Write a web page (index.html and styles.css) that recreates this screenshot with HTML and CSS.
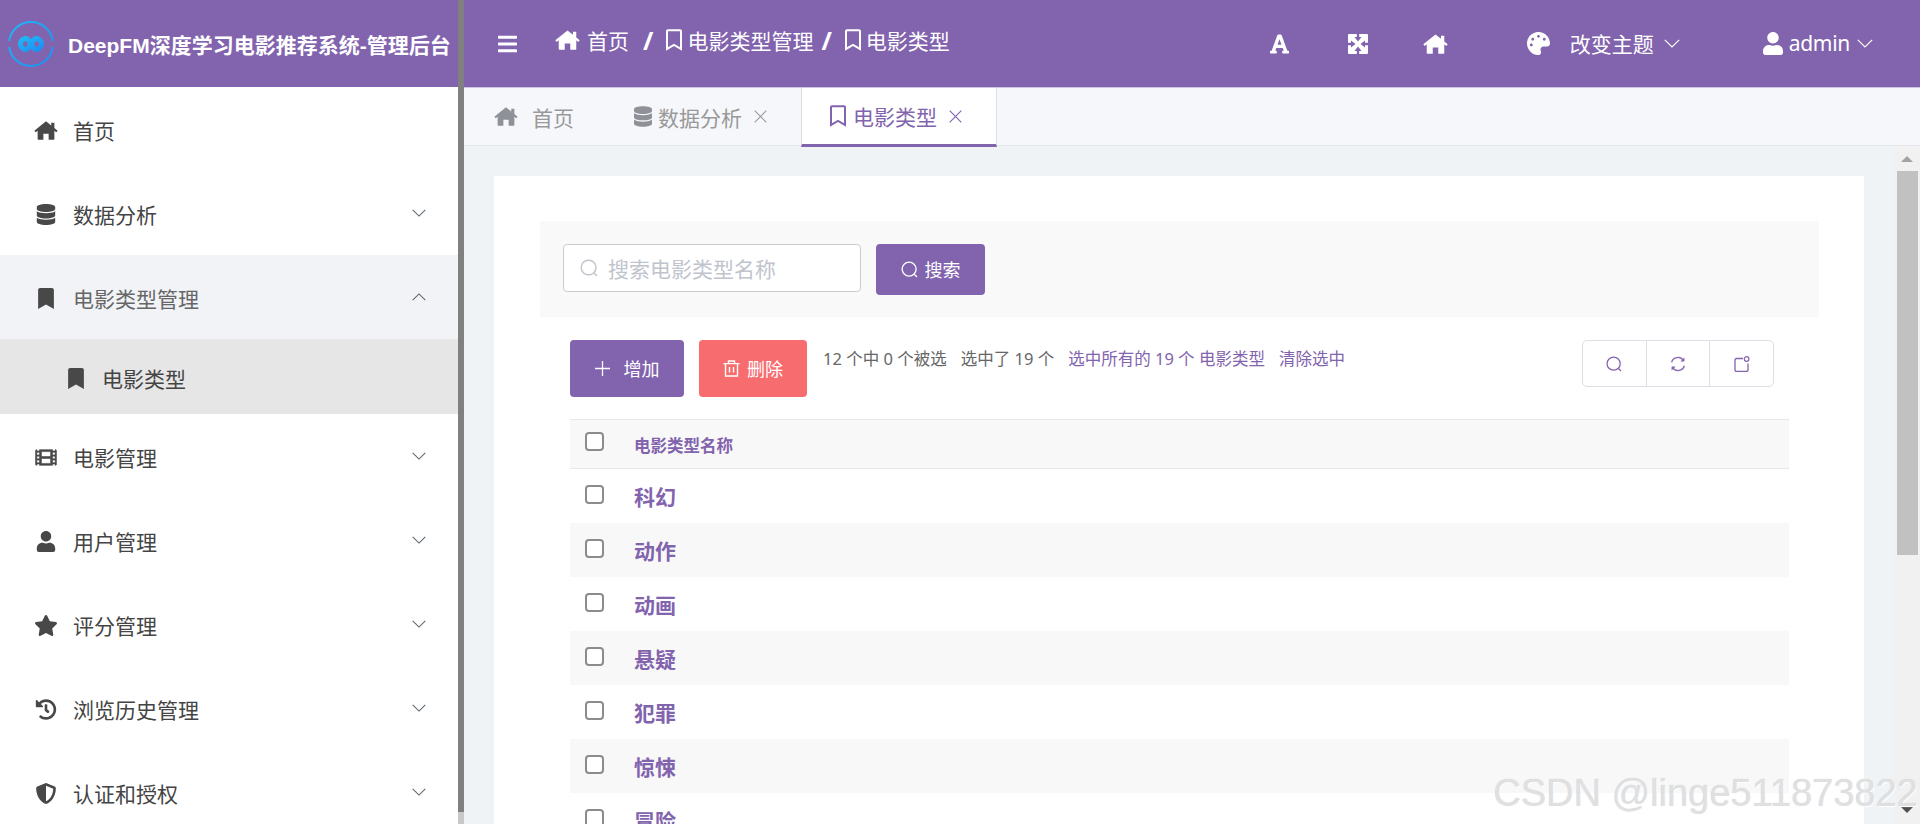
FILE: index.html
```html
<!DOCTYPE html>
<html lang="zh-CN">
<head>
  <meta charset="UTF-8">
  <title>DeepFM深度学习电影推荐系统-管理后台</title>
  <link rel="stylesheet" href="styles.css">
</head>
<body>
  <svg class="sprite" aria-hidden="true">
    <symbol id="i-home" viewBox="0 0 576 512"><path d="M288 32 4 262l34 38 46-38v202a16 16 0 0 0 16 16h124V336h128v144h124a16 16 0 0 0 16-16V262l46 38 34-38-80-65V64h-76v71z"/></symbol>
    <symbol id="i-database" viewBox="0 0 448 512"><path d="M448 73.143v45.714C448 159.143 347.667 192 224 192S0 159.143 0 118.857V73.143C0 32.857 100.333 0 224 0s224 32.857 224 73.143zM448 176v102.857C448 319.143 347.667 352 224 352S0 319.143 0 278.857V176c48.125 33.143 136.208 48.572 224 48.572S399.874 209.143 448 176zm0 160v102.857C448 479.143 347.667 512 224 512S0 479.143 0 438.857V336c48.125 33.143 136.208 48.572 224 48.572S399.874 369.143 448 336z"/></symbol>
    <symbol id="i-bookmark" viewBox="0 0 384 512"><path d="M0 512V48C0 21.49 21.49 0 48 0h288c26.51 0 48 21.49 48 48v464L192 400 0 512z"/></symbol>
    <symbol id="i-bookmark-o" viewBox="0 0 384 512"><path d="M336 0H48C21.49 0 0 21.49 0 48v464l192-112 192 112V48c0-26.51-21.49-48-48-48zm0 428.43l-144-84-144 84V54a6 6 0 0 1 6-6h276c3.314 0 6 2.683 6 5.996V428.43z"/></symbol>
    <symbol id="i-film" viewBox="0 48 512 416"><path stroke="currentColor" stroke-width="14" d="M488 64h-8v20c0 6.6-5.4 12-12 12h-40c-6.6 0-12-5.4-12-12V64H96v20c0 6.6-5.4 12-12 12H44c-6.6 0-12-5.4-12-12V64h-8C10.7 64 0 74.7 0 88v336c0 13.3 10.7 24 24 24h8v-20c0-6.6 5.4-12 12-12h40c6.6 0 12 5.4 12 12v20h320v-20c0-6.6 5.4-12 12-12h40c6.6 0 12 5.4 12 12v20h8c13.3 0 24-10.7 24-24V88c0-13.3-10.7-24-24-24zM96 372c0 6.6-5.4 12-12 12H44c-6.6 0-12-5.4-12-12v-40c0-6.6 5.4-12 12-12h40c6.6 0 12 5.4 12 12v40zm0-96c0 6.6-5.4 12-12 12H44c-6.6 0-12-5.4-12-12v-40c0-6.6 5.4-12 12-12h40c6.6 0 12 5.4 12 12v40zm0-96c0 6.6-5.4 12-12 12H44c-6.6 0-12-5.4-12-12v-40c0-6.6 5.4-12 12-12h40c6.6 0 12 5.4 12 12v40zm272 208c0 6.6-5.4 12-12 12H156c-6.6 0-12-5.4-12-12v-96c0-6.6 5.4-12 12-12h200c6.6 0 12 5.4 12 12v96zm0-168c0 6.6-5.4 12-12 12H156c-6.6 0-12-5.4-12-12v-96c0-6.6 5.4-12 12-12h200c6.6 0 12 5.4 12 12v96zm112 152c0 6.6-5.4 12-12 12h-40c-6.6 0-12-5.4-12-12v-40c0-6.6 5.4-12 12-12h40c6.6 0 12 5.4 12 12v40zm0-96c0 6.6-5.4 12-12 12h-40c-6.6 0-12-5.4-12-12v-40c0-6.6 5.4-12 12-12h40c6.6 0 12 5.4 12 12v40zm0-96c0 6.6-5.4 12-12 12h-40c-6.6 0-12-5.4-12-12v-40c0-6.6 5.4-12 12-12h40c6.6 0 12 5.4 12 12v40z"/></symbol>
    <symbol id="i-user" viewBox="0 0 448 512"><path d="M224 256c70.7 0 128-57.3 128-128S294.7 0 224 0 96 57.3 96 128s57.3 128 128 128zm89.6 32h-16.7c-22.2 10.2-46.9 16-72.9 16s-50.6-5.8-72.9-16h-16.7C60.2 288 0 348.2 0 422.4V464c0 26.5 21.5 48 48 48h352c26.5 0 48-21.5 48-48v-41.6c0-74.2-60.2-134.4-134.4-134.4z"/></symbol>
    <symbol id="i-star" viewBox="0 0 576 512"><path d="M259.3 17.8L194 150.2 47.9 171.5c-26.2 3.8-36.7 36.1-17.7 54.6l105.7 103-25 145.5c-4.5 26.3 23.2 46 46.4 33.7L288 439.6l130.7 68.7c23.2 12.2 50.9-7.4 46.4-33.7l-25-145.5 105.7-103c19-18.5 8.5-50.8-17.7-54.6L382 150.2 316.7 17.8c-11.7-23.6-45.6-23.9-57.4 0z"/></symbol>
    <symbol id="i-history" viewBox="0 0 512 512"><path d="M504 255.531c.253 136.64-111.18 248.372-247.82 248.468-59.015.042-113.223-20.53-155.822-54.911-11.077-8.94-11.905-25.541-1.839-35.607l11.267-11.267c8.609-8.609 22.353-9.551 31.891-1.984C173.062 425.135 212.781 440 256 440c101.705 0 184-82.311 184-184 0-101.705-82.311-184-184-184-48.814 0-93.149 18.969-126.068 49.932l50.754 50.754c10.08 10.08 2.941 27.314-11.313 27.314H24c-8.837 0-16-7.163-16-16V38.627c0-14.254 17.234-21.393 27.314-11.314l49.372 49.372C129.209 34.136 189.552 8 256 8c136.81 0 247.747 110.78 248 247.531zm-180.912 78.784l9.823-12.63c8.138-10.463 6.253-25.542-4.21-33.679L288 256.349V152c0-13.255-10.745-24-24-24h-16c-13.255 0-24 10.745-24 24v135.651l65.409 50.874c10.463 8.137 25.541 6.253 33.679-4.21z"/></symbol>
    <symbol id="i-shield" viewBox="0 0 512 512"><path d="M466.5 83.7l-192-80a48.15 48.15 0 0 0-36.9 0l-192 80C27.7 91.1 16 108.6 16 128c0 198.5 114.5 335.7 221.5 380.3 11.8 4.9 25.1 4.9 36.9 0C360.1 472.6 496 349.3 496 128c0-19.4-11.7-36.9-29.5-44.3zM256.1 446.3l-.1-381 175.9 73.3c-3.3 151.4-82.1 261.1-175.8 307.7z"/></symbol>
    <symbol id="i-bars" viewBox="0 0 448 512"><path d="M16 132h416c8.837 0 16-7.163 16-16V76c0-8.837-7.163-16-16-16H16C7.163 60 0 67.163 0 76v40c0 8.837 7.163 16 16 16zm0 160h416c8.837 0 16-7.163 16-16v-40c0-8.837-7.163-16-16-16H16c-8.837 0-16 7.163-16 16v40c0 8.837 7.163 16 16 16zm0 160h416c8.837 0 16-7.163 16-16v-40c0-8.837-7.163-16-16-16H16c-8.837 0-16 7.163-16 16v40c0 8.837 7.163 16 16 16z"/></symbol>
    <symbol id="i-font" viewBox="0 0 448 512"><path d="M432 416h-23.41L277.88 53.69A32 32 0 0 0 247.58 32h-47.16a32 32 0 0 0-30.3 21.69L39.41 416H16a16 16 0 0 0-16 16v32a16 16 0 0 0 16 16h128a16 16 0 0 0 16-16v-32a16 16 0 0 0-16-16h-19.58l23.3-64h152.56l23.3 64H304a16 16 0 0 0-16 16v32a16 16 0 0 0 16 16h128a16 16 0 0 0 16-16v-32a16 16 0 0 0-16-16zM176.85 272L224 142.51 271.15 272z"/></symbol>
    <symbol id="i-expand" viewBox="0 0 20 20"><path fill-rule="evenodd" d="M1 0h18a1 1 0 0 1 1 1v18a1 1 0 0 1-1 1H1a1 1 0 0 1-1-1V1a1 1 0 0 1 1-1zM8.800 0v3H6.500L10 7.500 13.500 3h-2.300V0zM8.800 20v-3H6.500L10 12.500l3.500 4.500h-2.300v3zM0 8.800h3V6.500L7.500 10 3 13.500v-2.300H0zM20 8.800h-3V6.500L12.500 10l4.500 3.500v-2.300h3z"/></symbol>
    <symbol id="i-palette" viewBox="0 0 512 512"><path d="M204.3 5C104.9 24.4 24.8 104.3 5.2 203.4c-37 187 131.7 326.4 258.8 306.7 41.2-6.4 61.4-54.6 42.5-91.7-23.1-45.4 9.9-98.4 60.9-98.4h79.7c35.8 0 64.8-29.6 64.9-65.3C511.5 97.1 368.1-26.9 204.3 5zM96 320c-17.7 0-32-14.3-32-32s14.3-32 32-32 32 14.3 32 32-14.3 32-32 32zm32-128c-17.7 0-32-14.3-32-32s14.3-32 32-32 32 14.3 32 32-14.3 32-32 32zm128-64c-17.7 0-32-14.3-32-32s14.3-32 32-32 32 14.3 32 32-14.3 32-32 32zm128 64c-17.7 0-32-14.3-32-32s14.3-32 32-32 32 14.3 32 32-14.3 32-32 32z"/></symbol>
    <symbol id="i-down" viewBox="0 0 16 9"><path d="M.8.8 8 8l7.200-7.200" fill="none" stroke="currentColor" stroke-width="1.200"/></symbol>
    <symbol id="i-up" viewBox="0 0 16 9"><path d="M.8 8.200 8 1l7.200 7.200" fill="none" stroke="currentColor" stroke-width="1.200"/></symbol>
    <symbol id="i-search" viewBox="0 0 18 18"><circle cx="8.600" cy="8.600" r="7.400" fill="none" stroke="currentColor" stroke-width="1.400"/><path d="M14 14l3 3" fill="none" stroke="currentColor" stroke-width="1.400"/></symbol>
    <symbol id="i-close" viewBox="0 0 13 13"><path d="M.7.7l11.600 11.600M12.300.7.7 12.300" fill="none" stroke="currentColor" stroke-width="1.100"/></symbol>
    <symbol id="i-plus" viewBox="0 0 15 15"><path d="M7.500 0v15M0 7.500h15" fill="none" stroke="currentColor" stroke-width="1.300"/></symbol>
    <symbol id="i-trash" viewBox="0 0 16 17"><path d="M0 3.600h16M5 3.600V1h6v2.600M2 3.600V16h12V3.600M6 7v5.500M10 7v5.500" fill="none" stroke="currentColor" stroke-width="1.400"/></symbol>
    <symbol id="i-refresh" viewBox="0 0 16 16"><path d="M1.600 6.200A6.600 6.600 0 0 1 13.400 4.400M14.400 9.800A6.600 6.600 0 0 1 2.600 11.600" fill="none" stroke="currentColor" stroke-width="1.300"/><path d="M14.400 1.600v4h-4zM1.600 14.400v-4h4z" fill="currentColor"/></symbol>
    <symbol id="i-setting" viewBox="0 0 16 16"><path d="M9 2.500H2.500A1.500 1.500 0 0 0 1 4v10a1.500 1.500 0 0 0 1.500 1.500h10A1.500 1.500 0 0 0 14 14V7.500" fill="none" stroke="currentColor" stroke-width="1.300"/><circle cx="12.600" cy="3" r="2.300" fill="none" stroke="currentColor" stroke-width="1.200"/></symbol>
  </svg>

  <aside class="sidebar">
    <div class="sidebar-inner">
      <div class="brand">
        <svg class="brand-logo" viewBox="0 0 46 46">
          <defs>
            <linearGradient id="logoGrad" x1="0" y1="0" x2="1" y2="1">
              <stop offset="0" stop-color="#1db8f6"/>
              <stop offset="1" stop-color="#1f8ef2"/>
            </linearGradient>
          </defs>
          <path d="M1.200 20A22 22 0 0 1 44.800 20M44.800 26A22 22 0 0 1 1.200 26" fill="none" stroke="url(#logoGrad)" stroke-width="2"/>
          <path d="M23 23c-2.500-3.500-3-5.500-5-5.500a5.500 5.500 0 0 0 0 11c2 0 2.500-2 5-5.500s3-5.500 5-5.500a5.500 5.500 0 0 1 0 11c-2 0-2.500-2-5-5.500z" fill="none" stroke="url(#logoGrad)" stroke-width="5"/>
        </svg>
        <span class="brand-title">DeepFM深度学习电影推荐系统-管理后台</span>
      </div>
      <nav class="menu">
        <a class="menu-item"><svg class="menu-icon"><use href="#i-home"/></svg><span>首页</span></a>
        <a class="menu-item"><svg class="menu-icon"><use href="#i-database"/></svg><span>数据分析</span><svg class="menu-arrow"><use href="#i-down"/></svg></a>
        <a class="menu-item open"><svg class="menu-icon"><use href="#i-bookmark"/></svg><span>电影类型管理</span><svg class="menu-arrow"><use href="#i-up"/></svg></a>
        <a class="menu-sub"><svg class="menu-icon"><use href="#i-bookmark"/></svg><span>电影类型</span></a>
        <a class="menu-item"><svg class="menu-icon icon-film"><use href="#i-film"/></svg><span>电影管理</span><svg class="menu-arrow"><use href="#i-down"/></svg></a>
        <a class="menu-item"><svg class="menu-icon"><use href="#i-user"/></svg><span>用户管理</span><svg class="menu-arrow"><use href="#i-down"/></svg></a>
        <a class="menu-item"><svg class="menu-icon"><use href="#i-star"/></svg><span>评分管理</span><svg class="menu-arrow"><use href="#i-down"/></svg></a>
        <a class="menu-item"><svg class="menu-icon"><use href="#i-history"/></svg><span>浏览历史管理</span><svg class="menu-arrow"><use href="#i-down"/></svg></a>
        <a class="menu-item"><svg class="menu-icon"><use href="#i-shield"/></svg><span>认证和授权</span><svg class="menu-arrow"><use href="#i-down"/></svg></a>
      </nav>
    </div>
    <div class="sidebar-scroll"><div class="sidebar-thumb"></div></div>
  </aside>

  <div class="main">
    <header class="topbar">
      <svg class="topbar-toggle"><use href="#i-bars"/></svg>
      <div class="crumbs">
        <svg class="crumb-home"><use href="#i-home"/></svg><span>首页</span>
        <span class="crumb-sep">/</span>
        <svg class="crumb-mark"><use href="#i-bookmark-o"/></svg><span>电影类型管理</span>
        <span class="crumb-sep crumb-sep-tight">/</span>
        <svg class="crumb-mark"><use href="#i-bookmark-o"/></svg><span>电影类型</span>
      </div>
      <div class="topbar-right">
        <span class="tool"><svg class="tool-font"><use href="#i-font"/></svg></span>
        <span class="tool"><svg class="tool-expand"><use href="#i-expand"/></svg></span>
        <span class="tool"><svg class="tool-home"><use href="#i-home"/></svg></span>
        <span class="theme">
          <svg class="theme-icon"><use href="#i-palette"/></svg>
          <span class="top-label">改变主题</span>
          <svg class="top-arrow"><use href="#i-down"/></svg>
        </span>
        <span class="account">
          <svg class="account-icon"><use href="#i-user"/></svg>
          <span class="top-label account-name">admin</span>
          <svg class="top-arrow"><use href="#i-down"/></svg>
        </span>
      </div>
    </header>

    <div class="tabs">
      <a class="tab tab-first"><svg class="tab-home"><use href="#i-home"/></svg><span>首页</span></a>
      <a class="tab"><svg class="tab-db"><use href="#i-database"/></svg><span>数据分析</span><svg class="tab-close"><use href="#i-close"/></svg></a>
      <a class="tab active"><svg class="tab-mark"><use href="#i-bookmark-o"/></svg><span>电影类型</span><svg class="tab-close"><use href="#i-close"/></svg></a>
    </div>

    <div class="content">
      <div class="scroll-area">
        <section class="card">
          <form class="search-panel">
            <label class="search-input">
              <svg class="search-icon"><use href="#i-search"/></svg>
              <span class="placeholder">搜索电影类型名称</span>
            </label>
            <button class="btn btn-search" type="button"><svg class="btn-icon"><use href="#i-search"/></svg>搜索</button>
          </form>

          <div class="list">
            <div class="actions">
              <button class="btn btn-add" type="button"><svg class="plus-icon"><use href="#i-plus"/></svg>增加</button>
              <button class="btn btn-del" type="button"><svg class="btn-icon"><use href="#i-trash"/></svg>删除</button>
              <div class="select-info">
                <span>12 个中 0 个被选</span>
                <span>选中了 19 个</span>
                <a>选中所有的 19 个 电影类型</a>
                <a>清除选中</a>
              </div>
              <div class="table-tools">
                <span><svg><use href="#i-search"/></svg></span>
                <span><svg><use href="#i-refresh"/></svg></span>
                <span><svg><use href="#i-setting"/></svg></span>
              </div>
            </div>

            <table class="grid">
              <thead>
                <tr><th class="check"><input type="checkbox"></th><th>电影类型名称</th></tr>
              </thead>
              <tbody>
                <tr><td class="check"><input type="checkbox"></td><td><a>科幻</a></td></tr>
                <tr><td class="check"><input type="checkbox"></td><td><a>动作</a></td></tr>
                <tr><td class="check"><input type="checkbox"></td><td><a>动画</a></td></tr>
                <tr><td class="check"><input type="checkbox"></td><td><a>悬疑</a></td></tr>
                <tr><td class="check"><input type="checkbox"></td><td><a>犯罪</a></td></tr>
                <tr><td class="check"><input type="checkbox"></td><td><a>惊悚</a></td></tr>
                <tr><td class="check"><input type="checkbox"></td><td><a>冒险</a></td></tr>
              </tbody>
            </table>
          </div>
        </section>
      </div>
      <div class="page-scroll">
        <span class="scroll-up"></span>
        <div class="page-thumb"></div>
        <span class="scroll-down"></span>
      </div>
    </div>
  </div>

  <div class="watermark">CSDN @linge511873822</div>
</body>
</html>
```

FILE: styles.css
```css
:root {
  --primary: #8263ae;
  --danger: #f76c6f;
  --text: #444;
  --line: #dcdfe6;
}

* {
  box-sizing: border-box;
}

html, body {
  height: 100%;
  margin: 0;
}

body {
  display: flex;
  overflow: hidden;
  position: relative;
  background: #f0f3f6;
  font-family: "Noto Sans", "Noto Sans CJK SC", sans-serif;
  color: var(--text);
}

.sprite {
  display: none;
}

svg {
  fill: currentColor;
  flex: none;
}

/* sidebar */
.sidebar {
  display: flex;
  width: 464px;
  flex: none;
  background: #fff;
}

.sidebar-inner {
  flex: 1;
  min-width: 0;
  overflow: hidden;
}

.sidebar-scroll {
  width: 6px;
  background: #c8c8c8;
}

.sidebar-thumb {
  height: 812px;
  background: #808080;
}

.brand {
  display: flex;
  align-items: center;
  height: 87px;
  padding-left: 8px;
  background: var(--primary);
  color: #fff;
}

.brand-logo {
  width: 46px;
  height: 46px;
  margin-right: 14px;
}

.brand-title {
  font-family: "Liberation Sans", "Noto Sans CJK SC", sans-serif;
  font-size: 21px;
  font-weight: 700;
  white-space: nowrap;
}

.menu-item,
.menu-sub {
  display: flex;
  align-items: center;
  height: 84px;
  padding: 2px 32px 0 34px;
  font-size: 21px;
}

.menu-item.open {
  background: #f1f3f7;
  color: #666;
}

.menu-sub {
  height: 75px;
  padding-left: 64px;
  padding-top: 3px;
  background: #e6e6e6;
}

.menu-icon {
  width: 24px;
  height: 21px;
  margin-right: 15px;
  color: #484848;
}

.menu-sub .menu-icon {
  margin-right: 14px;
}

.menu-icon.icon-film {
  height: 17px;
}

.menu-arrow {
  width: 14px;
  height: 8px;
  margin: -3px 0 0 auto;
  color: #5b6470;
}

/* top bar */
.main {
  display: flex;
  flex-direction: column;
  flex: 1;
  min-width: 0;
}

.topbar {
  display: flex;
  align-items: center;
  height: 87px;
  flex: none;
  padding-left: 34px;
  background: var(--primary);
  color: #fff;
}

.topbar-toggle {
  width: 19px;
  height: 22px;
  margin-right: 38px;
}

.crumbs {
  display: flex;
  align-items: center;
  padding-bottom: 7px;
  font-size: 21px;
}

.crumb-home {
  width: 25px;
  height: 22px;
  margin-right: 7px;
}

.crumb-mark {
  width: 16px;
  height: 22px;
  margin-right: 5px;
}

.crumb-sep {
  margin: 0 13px 0 14px;
  font-size: 25px;
  font-weight: 700;
  line-height: 1;
}

.crumb-sep-tight {
  margin-left: 8px;
}

.topbar-right {
  display: flex;
  align-items: center;
  margin-left: auto;
  padding-right: 47px;
  font-size: 21px;
}

.tool {
  display: flex;
  justify-content: center;
  width: 78px;
}

.tool-font {
  width: 19px;
  height: 22px;
}

.tool-expand {
  width: 20px;
  height: 20px;
}

.tool-home {
  width: 25px;
  height: 22px;
}

.theme {
  display: flex;
  align-items: center;
  margin-left: 52px;
}

.theme-icon {
  width: 23px;
  height: 23px;
  margin-right: 20px;
}

.top-label {
  padding-bottom: 2px;
}

.top-arrow {
  width: 16px;
  height: 9px;
  margin-left: 10px;
}

.account {
  display: flex;
  align-items: center;
  margin-left: 83px;
}

.account-icon {
  width: 20px;
  height: 23px;
  margin-right: 6px;
}

.account-name {
  margin-right: -3px;
  letter-spacing: -0.3px;
}

/* tabs */
.tabs {
  display: flex;
  height: 59px;
  flex: none;
  background: #f5f7fb;
  border-top: 1px solid #cfc5e0;
  border-bottom: 1px solid #e4e8ec;
}

.tab {
  display: flex;
  align-items: center;
  height: 57px;
  padding: 0 34px 0 30px;
  font-size: 21px;
  color: #999;
}

.tab-first {
  padding: 0 30px;
}

.tab-home {
  width: 24px;
  height: 21px;
  margin-right: 14px;
  color: #8e9197;
}

.tab-db {
  width: 18px;
  height: 21px;
  margin-right: 6px;
  color: #8e9197;
}

.tab-mark {
  width: 16px;
  height: 22px;
  margin-right: 7px;
}

.tab-close {
  width: 13px;
  height: 13px;
  margin-left: 12px;
}

.tab.active {
  height: 59px;
  padding: 0 34px 0 28px;
  background: #fff;
  color: var(--primary);
  border-left: 1px solid var(--line);
  border-right: 1px solid var(--line);
  border-bottom: 3px solid var(--primary);
}

/* page body */
.content {
  display: flex;
  flex: 1;
  min-height: 0;
}

.scroll-area {
  flex: 1;
  min-width: 0;
  padding: 30px 30px 0;
  overflow: hidden;
}

.card {
  height: 100%;
  padding: 45px 45px 0 46px;
  background: #fff;
  overflow: hidden;
}

.search-panel {
  display: flex;
  align-items: flex-start;
  gap: 15px;
  height: 96px;
  padding: 23px;
  background: #f9f9f9;
}

.search-input {
  display: flex;
  align-items: center;
  width: 298px;
  height: 48px;
  padding-left: 16px;
  background: #fff;
  border: 1px solid #ccc;
  border-radius: 4px;
}

.search-icon {
  width: 18px;
  height: 18px;
  margin-right: 10px;
  color: #c0c4cc;
}

.placeholder {
  font-size: 21px;
  color: #c0c4cc;
}

.btn {
  display: flex;
  align-items: center;
  justify-content: center;
  border: 0;
  border-radius: 4px;
  font-family: inherit;
  font-size: 18px;
  color: #fff;
}

.btn-icon {
  width: 17px;
  height: 17px;
  margin-right: 7px;
}

.btn-search {
  width: 109px;
  height: 51px;
  padding-bottom: 2px;
  background: var(--primary);
}

.list {
  padding: 23px 30px 0;
}

.actions {
  display: flex;
  align-items: flex-start;
  height: 57px;
  margin-bottom: 22px;
}

.btn-add {
  width: 114px;
  height: 57px;
  margin-right: 15px;
  padding-bottom: 2px;
  background: var(--primary);
}

.plus-icon {
  width: 15px;
  height: 15px;
  margin-right: 14px;
}

.btn-del {
  width: 108px;
  height: 57px;
  padding-bottom: 2px;
  background: var(--danger);
}

.select-info {
  display: flex;
  gap: 14px;
  margin: 7px 0 0 16px;
  font-size: 16.5px;
  line-height: 24px;
  color: #666;
}

.select-info a {
  color: var(--primary);
}

.table-tools {
  display: flex;
  width: 192px;
  height: 47px;
  margin: 0 15px 0 auto;
  border: 1px solid var(--line);
  border-radius: 5px;
  color: var(--primary);
}

.table-tools span {
  display: flex;
  align-items: center;
  justify-content: center;
  flex: 1;
}

.table-tools span + span {
  border-left: 1px solid var(--line);
}

.table-tools svg {
  width: 16px;
  height: 16px;
}

.grid {
  width: 100%;
  border-collapse: collapse;
}

.grid th {
  height: 49px;
  padding: 1px 0 0;
  text-align: left;
  font-size: 16.5px;
  font-weight: 700;
  color: var(--primary);
  background: #f8f8f8;
  border-top: 1px solid #e8e8e8;
  border-bottom: 1px solid #e8e8e8;
}

.grid td {
  height: 54px;
  padding: 1px 0 0;
  font-size: 21px;
  font-weight: 700;
  color: var(--primary);
}

.grid tbody tr:nth-child(even) td {
  background: #f8f8f8;
}

.grid .check {
  width: 64px;
  padding: 0 0 0 15px;
  vertical-align: top;
}

.grid input {
  display: block;
  appearance: none;
  width: 19px;
  height: 19px;
  margin: 16px 0 0;
  background: #fff;
  border: 2px solid #8c8c8c;
  border-radius: 4px;
}

.grid th input {
  margin-top: 12px;
}

/* page scrollbar */
.page-scroll {
  display: flex;
  flex-direction: column;
  align-items: center;
  width: 26px;
  flex: none;
  background: #f1f1f1;
}

.scroll-up,
.scroll-down {
  width: 0;
  height: 0;
  border-left: 6px solid transparent;
  border-right: 6px solid transparent;
}

.scroll-up {
  margin: 10px 0 9px;
  border-bottom: 6px solid #a3a3a3;
}

.scroll-down {
  margin-top: auto;
  margin-bottom: 11px;
  border-top: 6px solid #505050;
}

.page-thumb {
  width: 21px;
  height: 384px;
  background: #c1c1c1;
}

.watermark {
  position: absolute;
  right: 2px;
  bottom: 11px;
  font-family: "Liberation Sans", sans-serif;
  font-size: 38px;
  line-height: 40px;
  color: #e0e0e0;
  text-shadow: 1px 1px 1px #fff, 0 0 1px #c4c4c4;
  white-space: nowrap;
}
```
